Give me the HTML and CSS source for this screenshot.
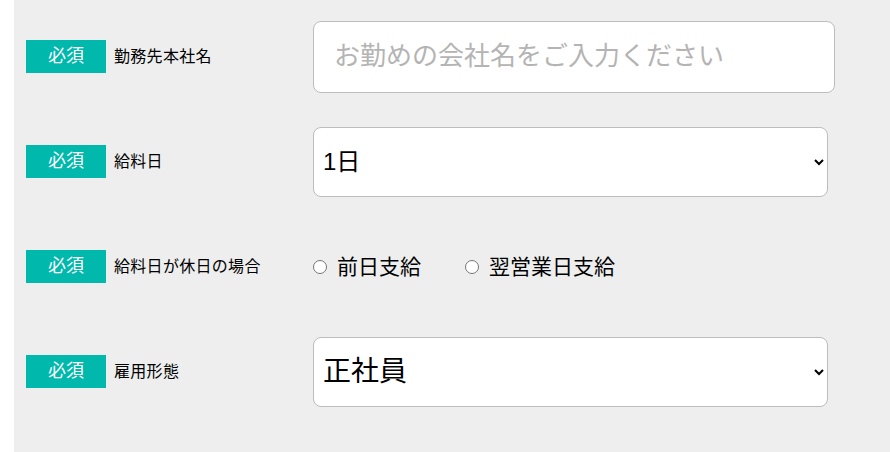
FILE: index.html
```html
<!DOCTYPE html>
<html lang="ja">
<head>
    <meta charset="UTF-8">
    <title>勤務先情報</title>
    <link rel="stylesheet" href="styles.css">
</head>
<body>
<div class="form">
    <div class="row">
        <div class="head">
            <span class="must">必須</span>
            <span class="label">勤務先本社名</span>
        </div>
        <div class="field">
            <input type="text" class="text" placeholder="お勤めの会社名をご入力ください">
        </div>
    </div>
    <div class="row">
        <div class="head">
            <span class="must">必須</span>
            <span class="label">給料日</span>
        </div>
        <div class="field">
            <select class="sel sel-day">
                <option>1日</option>
                <option>5日</option>
                <option>10日</option>
                <option>15日</option>
                <option>20日</option>
                <option>25日</option>
                <option>末日</option>
            </select>
        </div>
    </div>
    <div class="row">
        <div class="head">
            <span class="must">必須</span>
            <span class="label">給料日が休日の場合</span>
        </div>
        <div class="field radios">
            <label class="radio"><input type="radio" name="holiday">前日支給</label>
            <label class="radio"><input type="radio" name="holiday">翌営業日支給</label>
        </div>
    </div>
    <div class="row">
        <div class="head">
            <span class="must">必須</span>
            <span class="label">雇用形態</span>
        </div>
        <div class="field">
            <select class="sel sel-type">
                <option>正社員</option>
                <option>契約社員</option>
                <option>派遣社員</option>
                <option>パート・アルバイト</option>
            </select>
        </div>
    </div>
</div>
</body>
</html>
```
FILE: styles.css
```css
@charset "UTF-8";
/* reset */
body,ul,li,p{margin:0;padding:0}
body{font:16px/1.5 "Liberation Sans", "Noto Sans CJK JP", sans-serif;color:#000;background:#fff;}
input,select,button{font-family:"Liberation Sans", "Noto Sans CJK JP", sans-serif;outline:none;}

.form{
    margin-left:14px;
    min-height:452px;
    padding-top:4px;
    background:#eeeeee;
    box-sizing:border-box;
}
.row{
    height:105px;
    display:flex;
    align-items:center;
}
.head{
    width:299px;
    padding-left:12px;
    box-sizing:border-box;
    display:flex;
    align-items:center;
    gap:8px;
}
.must{
    width:80px;
    height:33px;
    line-height:33px;
    text-align:center;
    background:#00b8ab;
    color:#fff;
    font-size:18px;
}
.label{
    font-size:16px;
    letter-spacing:0.3px;
}
.field{
    flex:1;
}
.text{
    width:522px;
    height:72px;
    padding:0 20px;
    box-sizing:border-box;
    border:1px solid #bdbdbd;
    border-radius:8px;
    background:#fff;
    font-size:26px;
    color:#000;
}
.text::placeholder{
    color:#b4b4b4;
}
.sel{
    width:515px;
    height:70px;
    padding:0 4px 0 5px;
    box-sizing:border-box;
    border:1px solid #bdbdbd;
    border-radius:8px;
    background:#fff;
    color:#000;
}
.sel-day{
    font-size:24px;
}
.sel-type{
    font-size:28px;
}
.radios{
    display:flex;
    align-items:center;
    gap:44px;
}
.radio{
    display:flex;
    align-items:center;
    font-size:21px;
}
.radio input{
    -webkit-appearance:none;
    appearance:none;
    flex:none;
    margin:0 10px 0 0;
    width:14px;
    height:14px;
    border:1px solid #767676;
    border-radius:50%;
    background:#fff;
    box-sizing:border-box;
}
```
